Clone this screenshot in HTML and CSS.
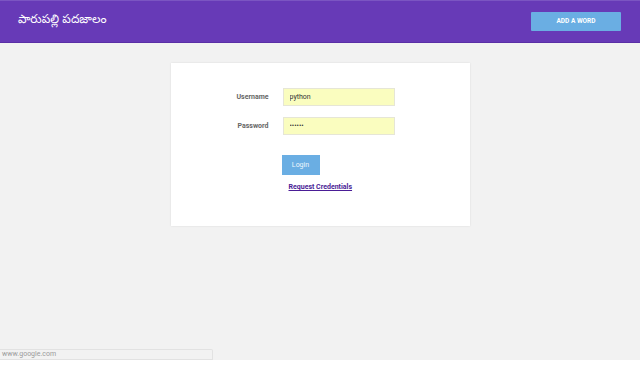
FILE: index.html
```html
<!DOCTYPE html>
<html lang="te">
<head>
<meta charset="UTF-8">
<meta name="viewport" content="width=device-width, initial-scale=1.0">
<title>పారుపల్లి పదజాలం</title>
<link rel="stylesheet" href="styles.css">
</head>
<body>

<div class="page">
    <header class="topbar">
        <span class="brand">పారుపల్లి పదజాలం</span>
        <button class="add-btn">ADD A WORD</button>
    </header>

    <div class="card">
        <form class="login-form">
            <label for="username">Username</label>
            <input type="text" id="username" value="python">
            <label for="password">Password</label>
            <input type="password" id="password" value="python">
            <div class="actions">
                <button type="button" class="login-btn">Login</button>
                <a href="#" class="request">Request Credentials</a>
            </div>
        </form>
    </div>
</div>

<div class="status">www.google.com</div>

</body>
</html>
```

FILE: styles.css
```css
body {
    font-family: Roboto, "Liberation Sans", Arial, sans-serif;
    margin: 0;
    background: #fff;
}
.page {
    background: #f2f2f2;
    height: 360px;
}
.topbar {
    height: 41px;
    background: #673ab7;
    border-top: 1px solid #7b55c2;
    border-bottom: 1px solid #5a2fa6;
    display: flex;
    align-items: center;
    justify-content: space-between;
    padding: 0 19px 0 18px;
}
.brand {
    color: #fff;
    font-family: "Noto Sans Telugu", "Noto Sans", sans-serif;
    font-size: 12px;
    margin-top: -2px;
}
.add-btn {
    background: #6aaee3;
    color: #fff;
    border: none;
    border-radius: 1px;
    width: 90px;
    height: 19px;
    font-family: Roboto, "Liberation Sans", Arial, sans-serif;
    font-size: 6.5px;
    font-weight: bold;
    margin-top: -1px;
    padding: 0;
}
.card {
    background: #fff;
    width: 299px;
    height: 163px;
    margin: 20px auto 0;
    box-shadow: 0 0 2px rgba(0, 0, 0, 0.1);
    box-sizing: border-box;
    padding-top: 25px;
}
.login-form {
    display: grid;
    grid-template-columns: 98px 112px;
    column-gap: 14px;
    row-gap: 11px;
    align-items: center;
}
label {
    text-align: right;
    font-size: 7px;
    font-weight: bold;
    color: #666;
}
input {
    height: 18px;
    box-sizing: border-box;
    border: 1px solid #e6e6d6;
    background: #fafdbf;
    font-family: Roboto, "Liberation Sans", Arial, sans-serif;
    font-size: 7px;
    padding: 0 6px;
    color: #333;
    outline: none;
}
.actions {
    grid-column: 2;
    display: flex;
    flex-direction: column;
    align-items: flex-start;
    margin-top: 9px;
}
.login-btn {
    background: #6aaee3;
    color: #eef6fc;
    border: none;
    width: 38px;
    height: 20px;
    margin-left: -1px;
    font-family: Roboto, "Liberation Sans", Arial, sans-serif;
    font-size: 7px;
    padding: 0;
}
.request {
    margin: 8px 0 0 6px;
    color: #4a1d96;
    font-size: 7px;
    font-weight: bold;
}
.status {
    position: fixed;
    left: 0;
    top: 349px;
    width: 210px;
    height: 9px;
    background: #f2f2f2;
    border: 1px solid #e2e2e2;
    border-left: none;
    border-radius: 0 2px 0 0;
    color: #9a9a9a;
    font-size: 7px;
    line-height: 9px;
    padding-left: 2px;
}
```
